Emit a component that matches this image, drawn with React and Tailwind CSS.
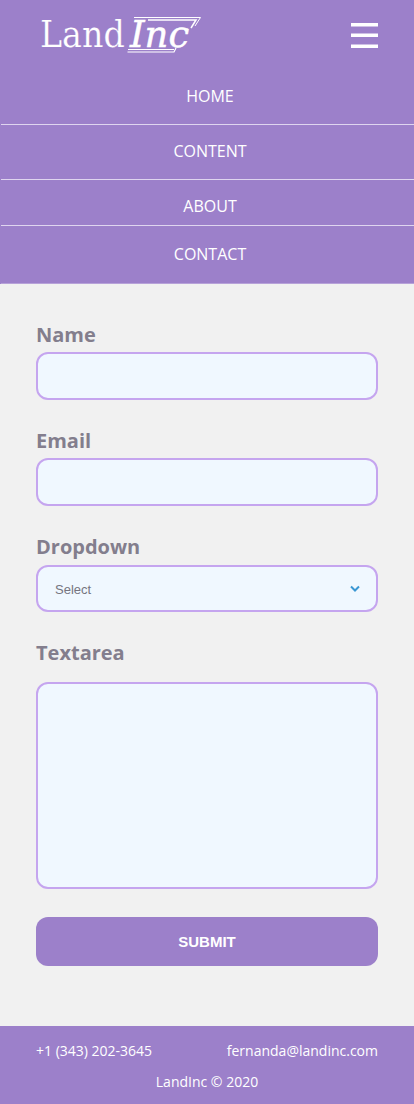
import { useState } from "react";

function Logo() {
  return (
    <svg width="166" height="54" viewBox="0 -6 166 54" role="img" aria-label="LandInc">
      <g fill="#fff" fontFamily='"DejaVu Serif", serif'>
        <text x="1" y="33" fontSize="37" stroke="#9c80ca" strokeWidth="0.2" style={{ fontFamily: '"DejaVu Serif Condensed", "DejaVu Serif", serif' }}>
          Land
        </text>
        <text x="91" y="33" fontSize="37" fontStyle="italic" stroke="#fff" strokeWidth="0.5">
          Inc
        </text>
      </g>
      <g fill="none" stroke="#fff">
        <path d="M95 3.500H161.500L156 12" strokeWidth="1" />
        <path d="M109 6H157L152 14" strokeWidth="1.5" />
        <path d="M89 35.500H135" strokeWidth="1.2" />
        <path d="M88.500 38H135L137 34" strokeWidth="1.2" />
      </g>
    </svg>
  );
}

const links = [
  { label: "HOME", pad: "pt-[14px] pb-4" },
  { label: "CONTENT", pad: "pt-[14px] pb-4" },
  { label: "ABOUT", pad: "pt-[14px] pb-[7px]" },
  { label: "CONTACT", pad: "pt-4 pb-[17px]" },
];

const labelClass = "block text-xl leading-7 font-bold text-[#837e8d]";
const fieldClass =
  "block w-full rounded-[12px] border-2 border-[#c5a5ef] bg-[#f0f8ff] px-[17px] font-['Liberation_Sans',sans-serif] text-[13px] text-[#757580] outline-none focus:border-[#9c80ca]";

export default function App() {
  const [open, setOpen] = useState(true);

  return (
    <div className="min-h-screen bg-[#f1f1f1] font-['Open_Sans',sans-serif]">
      <header className="bg-[#9c80ca] text-white">
        <div className="flex h-[70px] items-center justify-between pr-9 pl-[39px]">
          <a href="#home">
            <Logo />
          </a>
          <button type="button" aria-label="Menu" aria-expanded={open} onClick={() => setOpen(!open)} className="cursor-pointer">
            <svg width="27" height="26" viewBox="0 0 27 26" fill="#fff" aria-hidden="true">
              <path d="M0 1H27V4.500H0zM0 11.500H27V15H0zM0 22.500H27V26H0z" />
            </svg>
          </button>
        </div>
        {open && (
          <nav>
            <ul className="pl-px">
              {links.map(({ label, pad }) => (
                <li key={label} className="border-b border-[#dfd5ef] pl-[5px] last:border-[#b7a2d9]">
                  <a href={"#" + label.toLowerCase()} className={"block text-center text-base leading-6 " + pad}>
                    {label}
                  </a>
                </li>
              ))}
            </ul>
          </nav>
        )}
      </header>

      <main>
        <form className="px-9 pt-[37px] pb-[60px]" onSubmit={(e) => e.preventDefault()}>
          <label htmlFor="name" className={labelClass}>Name</label>
          <input id="name" type="text" className={fieldClass + " mt-[3px] mb-[27px] h-12"} />

          <label htmlFor="email" className={labelClass}>Email</label>
          <input id="email" type="email" className={fieldClass + " mt-[3px] mb-[27px] h-12"} />

          <label htmlFor="dropdown" className={labelClass}>Dropdown</label>
          <div className="mt-1 mb-[27px] grid items-center">
            <select id="dropdown" className={fieldClass + " col-start-1 row-start-1 h-[47px] appearance-none pt-[2px]"}>
              <option>Select</option>
            </select>
            <svg width="10" height="7" viewBox="0 0 10 7" fill="none" stroke="#3a97d3" strokeWidth="2" aria-hidden="true" className="pointer-events-none col-start-1 row-start-1 mr-[18px] justify-self-end">
              <path d="M1 1.500L5 5.500L9 1.500" />
            </svg>
          </div>

          <label htmlFor="message" className={labelClass}>Textarea</label>
          <textarea id="message" className={fieldClass + " mt-[15px] h-[207px] resize-none py-4"} />

          <button type="submit" className="mt-7 block h-[49px] w-full cursor-pointer rounded-[12px] bg-[#9c80ca] pt-px font-['Liberation_Sans',sans-serif] text-[15px] font-bold text-white">
            SUBMIT
          </button>
        </form>
      </main>

      <footer className="bg-[#9c80ca] px-9 pt-[14px] pb-[11px] text-sm leading-[22px] text-white">
        <div className="flex justify-between">
          <a href="tel:+13432023645">+1 (343) 202-3645</a>
          <a href="mailto:fernanda@landinc.com">fernanda@landinc.com</a>
        </div>
        <p className="mt-[9px] text-center">LandInc © 2020</p>
      </footer>
    </div>
  );
}
